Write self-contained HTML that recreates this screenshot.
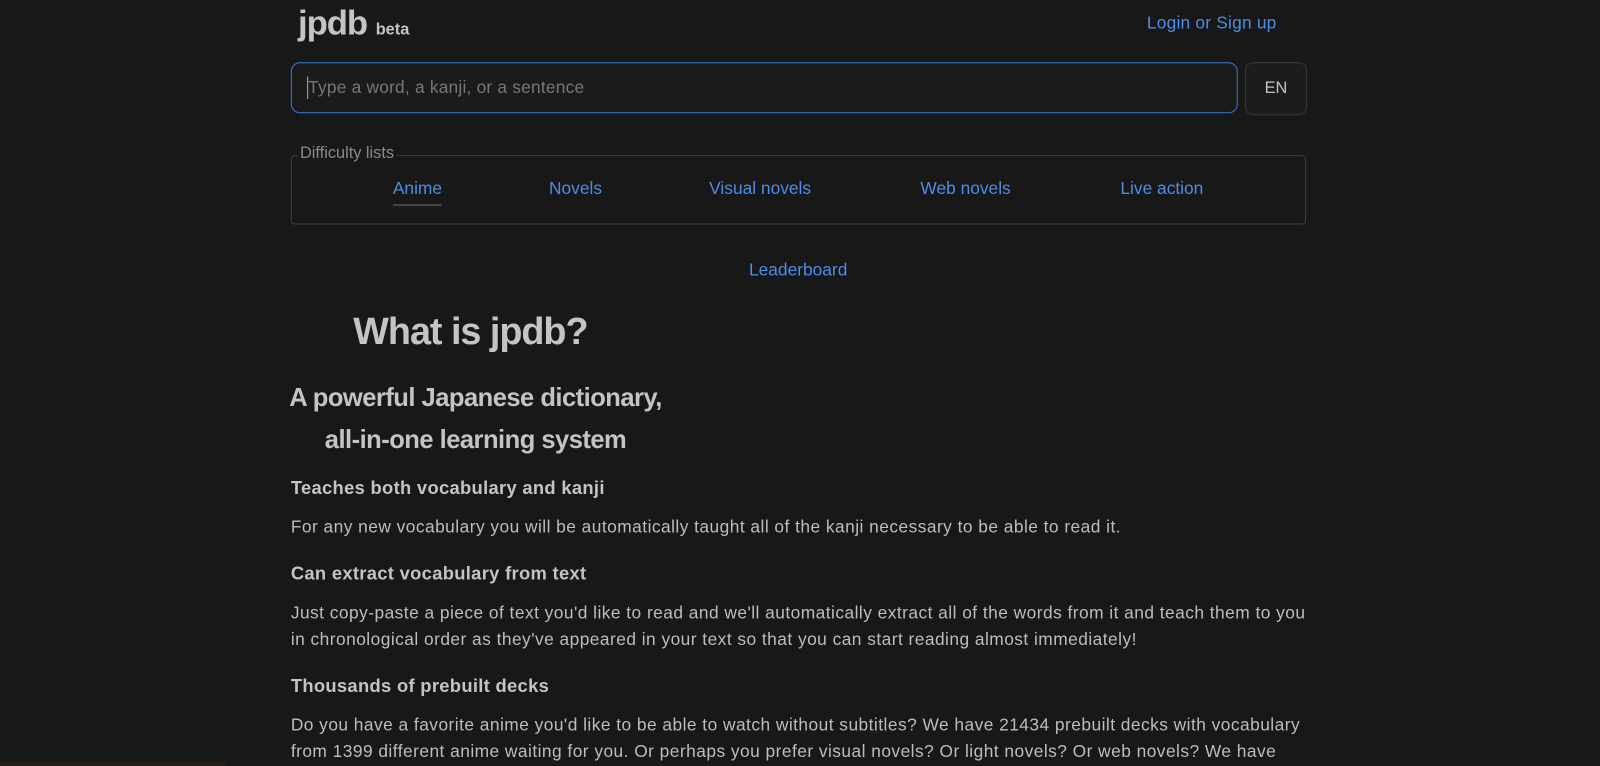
<!DOCTYPE html>
<html><head><meta charset="utf-8"><style>
body{margin:0;background:#181818;color:#bdbdbd;font-family:"Liberation Sans",sans-serif;width:1600px;height:766px;overflow:hidden;position:relative}
#w{position:absolute;left:0;top:0;width:1568px;height:751px;transform:scale(1.0204);transform-origin:0 0}
.a{position:absolute;white-space:nowrap}
a{color:#4a8ee8;text-decoration:none}
.p{font-size:17px;letter-spacing:0.45px;line-height:26px}
.h{font-size:18px;font-weight:bold;color:#c4c4c4;letter-spacing:0.3px}
</style></head><body><div id="w">
<div class="a" style="left:292px;top:4px;font-size:34px;font-weight:bold;color:#c4c4c4;letter-spacing:-1px">jpdb <span style="font-size:16px;letter-spacing:0">beta</span></div>
<a class="a" style="left:1124px;top:13px;font-size:17px;letter-spacing:0.2px">Login or Sign up</a>
<div class="a" style="left:285px;top:61px;width:926px;height:48px;border:1.5px solid #3a78d8;border-radius:9px;background:#1b1b1b"></div>
<div class="a" style="left:301px;top:75px;width:1px;height:22px;background:#aaa"></div>
<div class="a" style="left:302px;top:76px;font-size:17px;color:#777;letter-spacing:0.2px">Type a word, a kanji, or a sentence</div>
<div class="a" style="left:1220px;top:61px;width:59px;height:50px;border:1px solid #3a3a3a;border-radius:8px;background:#1c1c1c;text-align:center;line-height:50px;font-size:16px;color:#c4c4c4">EN</div>
<div class="a" style="left:285px;top:152px;width:993px;height:66px;border:1px solid #3e3e3e;border-radius:4px"></div>
<div class="a" style="left:292px;top:142px;background:#181818;padding:0 2px;font-size:16px;color:#8a8a8a">Difficulty lists</div>
<a class="a" style="left:385px;top:175px;font-size:17px;border-bottom:2px solid #444;padding-bottom:5px">Anime</a>
<a class="a" style="left:538px;top:175px;font-size:17px">Novels</a>
<a class="a" style="left:695px;top:175px;font-size:17px">Visual novels</a>
<a class="a" style="left:902px;top:175px;font-size:17px">Web novels</a>
<a class="a" style="left:1098px;top:175px;font-size:17px">Live action</a>
<a class="a" style="left:734px;top:255px;font-size:17px">Leaderboard</a>
<div class="a" style="left:285px;top:304px;width:352px;text-align:center;font-size:37px;font-weight:bold;color:#c4c4c4;letter-spacing:-1px">What is jpdb?</div>
<div class="a" style="left:275px;top:370px;width:382px;text-align:center;font-size:25px;font-weight:bold;color:#c4c4c4;line-height:41px;white-space:normal;letter-spacing:-0.5px">A powerful Japanese dictionary,<br>all-in-one learning system</div>
<div class="a h" style="left:285px;top:468px">Teaches both vocabulary and kanji</div>
<div class="a p" style="left:285px;top:504px">For any new vocabulary you will be automatically taught all of the kanji necessary to be able to read it.</div>
<div class="a h" style="left:285px;top:552px">Can extract vocabulary from text</div>
<div class="a p" style="left:285px;top:588px">Just copy-paste a piece of text you'd like to read and we'll automatically extract all of the words from it and teach them to you<br>in chronological order as they've appeared in your text so that you can start reading almost immediately!</div>
<div class="a h" style="left:285px;top:662px">Thousands of prebuilt decks</div>
<div class="a p" style="left:285px;top:698px">Do you have a favorite anime you'd like to be able to watch without subtitles? We have 21434 prebuilt decks with vocabulary<br>from 1399 different anime waiting for you. Or perhaps you prefer visual novels? Or light novels? Or web novels? We have</div>
<div class="a" style="left:0;top:746px;width:222px;height:5px;background:#221e10;border-radius:0 4px 0 0"></div>
</div></body></html>
